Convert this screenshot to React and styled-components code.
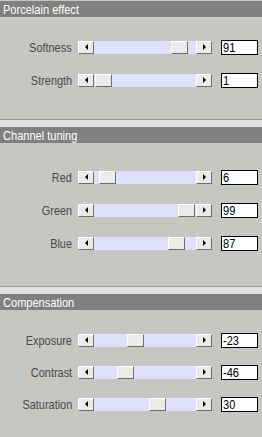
import React from 'react'
import styled, { createGlobalStyle } from 'styled-components'

const GlobalStyle = createGlobalStyle`
  html, body {
    margin: 0;
    padding: 0;
    background: #c6c6c2;
  }
  body {
    font-family: "Liberation Sans", Arial, sans-serif;
  }
`

const sections = [
  {
    title: 'Porcelain effect',
    first: true,
    pt: 23,
    pb: 32,
    gap: 19,
    rows: [
      { label: 'Softness', value: 91, min: 0, max: 100 },
      { label: 'Strength', value: 1, min: 0, max: 100 }
    ]
  },
  {
    title: 'Channel tuning',
    pt: 27,
    pb: 36,
    gap: 19,
    rows: [
      { label: 'Red', value: 6, min: 0, max: 100 },
      { label: 'Green', value: 99, min: 0, max: 100 },
      { label: 'Blue', value: 87, min: 0, max: 100 }
    ]
  },
  {
    title: 'Compensation',
    pt: 23,
    pb: 20,
    gap: 18,
    rows: [
      { label: 'Exposure', value: -23, min: -100, max: 100 },
      { label: 'Contrast', value: -46, min: -100, max: 100 },
      { label: 'Saturation', value: 30, min: -100, max: 100 }
    ]
  }
]

const TRACK = 102
const THUMB = 17

const Slider = ({ value, min, max }) => {
  const frac = (value - min) / (max - min)
  const left = Math.round((TRACK - THUMB) * frac)
  return (
    <SliderBox>
      <ArrowButton><Arrow dir="left" /></ArrowButton>
      <Track>
        <Thumb style={{ left }} />
      </Track>
      <ArrowButton><Arrow dir="right" /></ArrowButton>
    </SliderBox>
  )
}

const App = () =>
  <Page>
    <GlobalStyle />
    {sections.map(s =>
      <Section key={s.title}>
        {!s.first && <Divider />}
        <Header><HeaderText>{s.title}</HeaderText></Header>
        <Body pt={s.pt} pb={s.pb} gap={s.gap}>
          {s.rows.map(r =>
            <Row key={r.label}>
              <Label><LabelText>{r.label}</LabelText></Label>
              <Slider value={r.value} min={r.min} max={r.max} />
              <ValueBox><ValueText>{r.value}</ValueText></ValueBox>
            </Row>
          )}
        </Body>
      </Section>
    )}
  </Page>

export default App

const Page = styled.div`
  width: 262px;
  height: 437px;
  overflow: hidden;
  padding-top: 1px;
  box-sizing: border-box;
  background: #c6c6c2;
`

const Section = styled.div`
  display: flex;
  flex-direction: column;
`

const Divider = styled.div`
  height: 7px;
  border-top: 1px solid #9c9c9a;
  background: #e2e2e0;
`

const Header = styled.div`
  height: 16px;
  line-height: 17px;
  padding-left: 3px;
  background: #808080;
  color: #ffffff;
  font-size: 13px;
`

const HeaderText = styled.span`
  display: inline-block;
  transform: scaleX(0.85);
  transform-origin: left center;
  white-space: nowrap;
`

const Body = styled.div`
  display: flex;
  flex-direction: column;
  gap: ${p => p.gap}px;
  padding-top: ${p => p.pt}px;
  padding-bottom: ${p => p.pb}px;
`

const Row = styled.div`
  display: flex;
  align-items: center;
  height: 14px;
`

const Label = styled.div`
  width: 72px;
  margin-right: 6px;
  text-align: right;
  font-size: 13px;
  color: #4a4a4a;
  white-space: nowrap;
`

const LabelText = styled.span`
  display: inline-block;
  transform: scaleX(0.84);
  transform-origin: right center;
`

const SliderBox = styled.div`
  display: flex;
  height: 13px;
  width: 136px;
  margin-right: 7px;
`

const ArrowButton = styled.div`
  width: 16px;
  height: 13px;
  box-sizing: border-box;
  background: #ebebea;
  border-top: 1px solid #ffffff;
  border-left: 1px solid #ffffff;
  border-right: 1px solid #6e6e6e;
  border-bottom: 1px solid #6e6e6e;
  display: flex;
  align-items: center;
  justify-content: center;
`

const Arrow = styled.span`
  width: 0;
  height: 0;
  border-top: 3px solid transparent;
  border-bottom: 3px solid transparent;
  ${p => p.dir === 'left'
    ? 'border-right: 3px solid #000;'
    : 'border-left: 3px solid #000;'}
`

const Track = styled.div`
  position: relative;
  width: ${TRACK}px;
  height: 13px;
  background: #e0e0fc;
`

const Thumb = styled.div`
  position: absolute;
  top: 0;
  width: ${THUMB}px;
  height: 13px;
  box-sizing: border-box;
  background: #ebebea;
  border-top: 1px solid #ffffff;
  border-left: 1px solid #ffffff;
  border-right: 1px solid #6e6e6e;
  border-bottom: 1px solid #6e6e6e;
`

const ValueBox = styled.div`
  width: 37px;
  height: 15px;
  box-sizing: border-box;
  background: #ffffff;
  border: 1px solid #000000;
  padding-left: 1px;
  font-size: 13px;
  line-height: 13px;
  color: #000000;
  overflow: hidden;
`

const ValueText = styled.span`
  display: inline-block;
  transform: scaleX(0.85);
  transform-origin: left center;
`
